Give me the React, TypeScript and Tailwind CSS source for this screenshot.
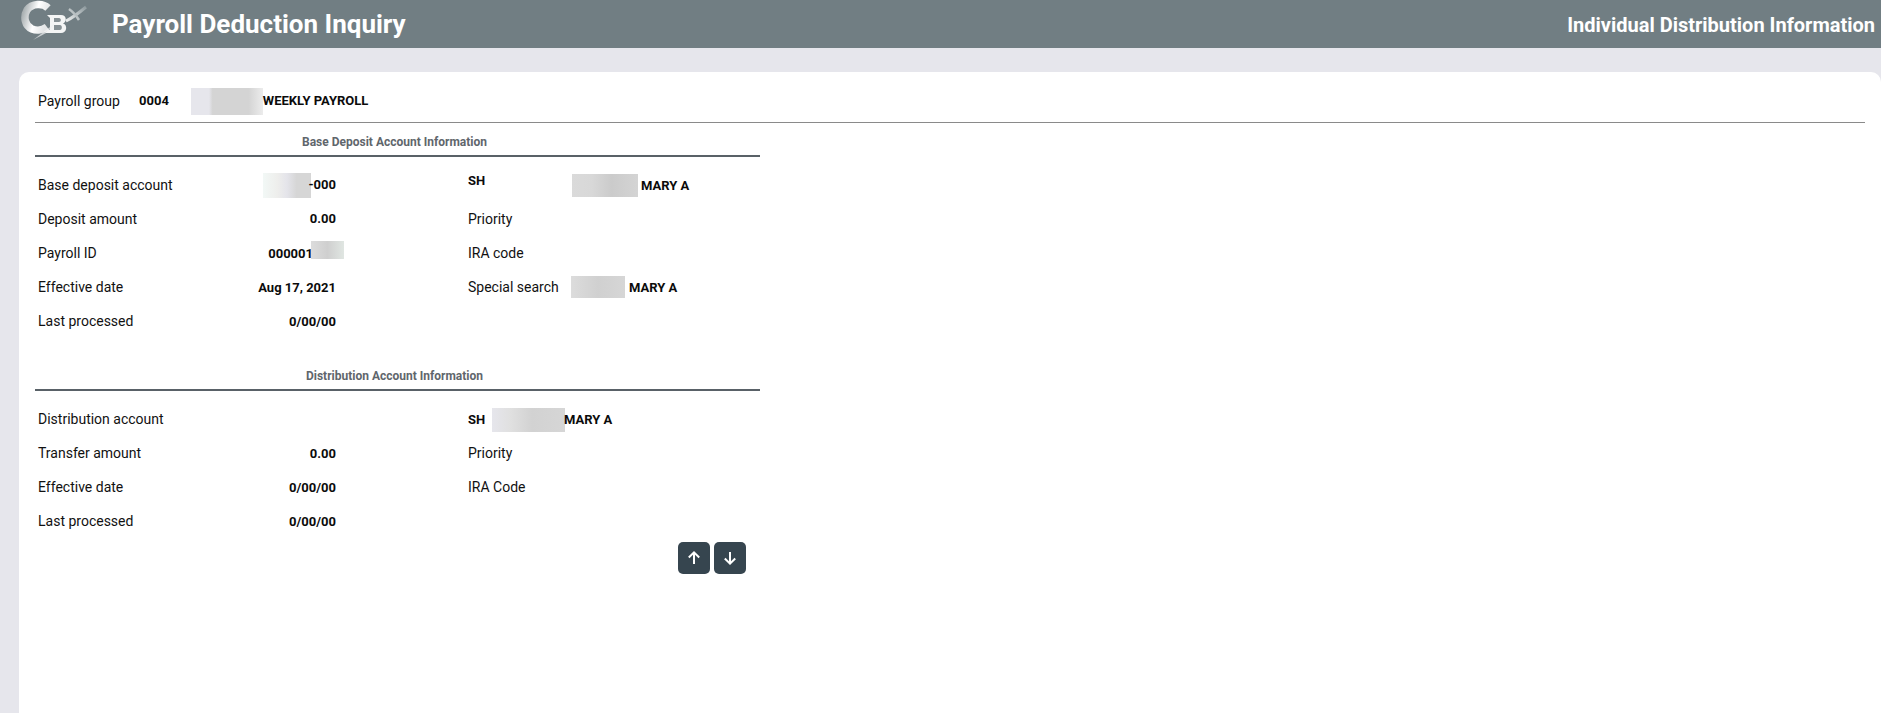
import { FunctionComponent, ReactNode } from "react";

const Val = ({ children }: { children: ReactNode }) => (
  <span className="text-[13px] font-bold text-[#0b0b0b] whitespace-nowrap">{children}</span>
);

const Blur = ({ className }: { className: string }) => <div className={`shrink-0 ${className}`} />;

const Row = ({ label, value, right }: { label: string; value?: ReactNode; right?: ReactNode }) => (
  <div className="flex h-[34.1px] items-center pl-[3px]">
    <div className="flex w-[298px] items-center justify-between">
      <span>{label}</span>
      {value}
    </div>
    <div className="ml-[132px] flex items-center">{right}</div>
  </div>
);

const SectionHead = ({ title }: { title: string }) => (
  <div className="w-[725px] border-b-2 border-[#596167] h-[34px] flex items-center justify-center pt-[6px] pr-[6px] text-[12px] font-bold text-[#5f666c]">
    {title}
  </div>
);

const Logo = () => (
  <svg width="70" height="44" viewBox="0 0 70 44" className="ml-[20px] self-start">
    <defs>
      <linearGradient id="cg" x1="0" y1="0" x2="1" y2="0.3">
        <stop offset="0" stopColor="#a9b0b2" />
        <stop offset="0.55" stopColor="#ffffff" />
        <stop offset="1" stopColor="#e4e6e7" />
      </linearGradient>
      <linearGradient id="xg" x1="0" y1="1" x2="1" y2="0">
        <stop offset="0" stopColor="#eef0f0" />
        <stop offset="1" stopColor="#8e9a9e" />
      </linearGradient>
    </defs>
    <path d="M28 8 C23 3 12 3 7 10 C3 17 5 26 12 29 C17 31 23 30 27 27" fill="none" stroke="url(#cg)" strokeWidth="7.5" />
    <path d="M27 15 H41 C47 15 47 22 43 23.500 C48 25 47 33 41 33 H25 L28 30 H30 V18 Z" fill="#f4f5f5" />
    <path d="M34 18 H39 C41.500 18 41.500 22 39 22 H34 Z M34 25 H40 C42.500 25 42.500 30 40 30 H34 Z" fill="#879195" />
    <path d="M13 40 L34 24 L28 32 Z" fill="url(#cg)" opacity="0.65" />
    <path d="M46 21 C52 18 60 12 66 7" fill="none" stroke="url(#xg)" strokeWidth="3" />
    <path d="M49 9 C52 11 56 15 59 20" fill="none" stroke="url(#xg)" strokeWidth="2.500" />
  </svg>
);

const App: FunctionComponent = () => {
  return (
    <div className="h-[713px] overflow-hidden bg-[#e6e6ec] flex flex-col font-['Roboto',sans-serif] text-[14px] text-[#111]">
      <header className="h-[48px] shrink-0 bg-[#717e83] flex items-center text-white">
        <Logo />
        <h1 className="ml-[22px] text-[26px] leading-[44px] font-bold">Payroll Deduction Inquiry</h1>
        <div className="ml-auto mr-[6px] pt-[2px] text-[20px] font-bold">Individual Distribution Information</div>
      </header>

      <main className="mt-6 ml-[19px] flex-1 rounded-t-[10px] bg-white pl-[16px] pr-[16px]">
        <div className="flex h-[51px] items-center border-b border-[#8a8a8a] pl-[3px] pt-[8px]">
          <span className="w-[101px]">Payroll group</span>
          <Val>0004</Val>
          <Blur className="ml-[22px] h-[27px] w-[72px] bg-[linear-gradient(90deg,#e6e6ec_0%,#e6e6ec_25%,#d4d4d4_30%,#d4d4d4_80%,#ececec_100%)]" />
          <Val>WEEKLY PAYROLL</Val>
        </div>

        <SectionHead title="Base Deposit Account Information" />
        <div className="pt-[11px]">
          <Row
            label="Base deposit account"
            value={
              <span className="flex items-center">
                <Blur className="-mr-[2px] h-[25px] w-[48px] bg-[linear-gradient(90deg,#f2f8f6_0%,#eeeeec_30%,#e4e4ea_50%,#d6d6d6_70%,#d6d6d6_100%)]" />
                <Val>-000</Val>
              </span>
            }
            right={
              <>
                <span className="-mt-[8px] w-[104px] text-[13px] font-bold text-[#0b0b0b]">SH</span>
                <Blur className="h-[23px] w-[66px] bg-[linear-gradient(90deg,#dadada_0%,#d8d8d8_30%,#cbcbcb_60%,#d4d4d4_100%)]" />
                <span className="ml-[3px]"><Val>MARY A</Val></span>
              </>
            }
          />
          <Row label="Deposit amount" value={<Val>0.00</Val>} right={<span>Priority</span>} />
          <Row
            label="Payroll ID"
            value={
              <span className="relative pr-[23px]">
                <Val>000001</Val>
                <Blur className="absolute -right-[8px] top-[-2px] h-[18px] w-[33px] bg-[linear-gradient(90deg,#dcdcdc_0%,#cfcfcf_50%,#e0e6e2_100%)]" />
              </span>
            }
            right={<span>IRA code</span>}
          />
          <Row
            label="Effective date"
            value={<Val>Aug 17, 2021</Val>}
            right={
              <>
                <span className="w-[103px]">Special search</span>
                <Blur className="h-[22px] w-[54px] bg-[linear-gradient(90deg,#dcdcdc_0%,#d0d0d0_50%,#d6d6d6_100%)]" />
                <span className="ml-[4px]"><Val>MARY A</Val></span>
              </>
            }
          />
          <Row label="Last processed" value={<Val>0/00/00</Val>} />
        </div>

        <div className="pt-[19px]">
          <SectionHead title="Distribution Account Information" />
        </div>
        <div className="pt-[11px]">
          <Row
            label="Distribution account"
            right={
              <>
                <span className="w-[24px] text-[13px] font-bold text-[#0b0b0b]">SH</span>
                <Blur className="h-[24px] w-[73px] bg-[linear-gradient(90deg,#e6e6ec_0%,#e0e0e0_25%,#d2d2d2_55%,#d6d6d6_100%)]" />
                <span className="-ml-[1px]"><Val>MARY A</Val></span>
              </>
            }
          />
          <Row label="Transfer amount" value={<Val>0.00</Val>} right={<span>Priority</span>} />
          <Row label="Effective date" value={<Val>0/00/00</Val>} right={<span>IRA Code</span>} />
          <Row label="Last processed" value={<Val>0/00/00</Val>} />
        </div>

        <div className="mt-[3px] flex w-[711px] justify-end gap-1">
          <button className="flex h-8 w-8 items-center justify-center rounded-[5px] bg-[#36454f] text-white">
            <svg width="16" height="16" viewBox="0 0 16 16" fill="none" stroke="currentColor" strokeWidth="2">
              <path d="M8 14V2.500M2.800 7.500L8 2.300L13.200 7.500" />
            </svg>
          </button>
          <button className="flex h-8 w-8 items-center justify-center rounded-[5px] bg-[#36454f] text-white">
            <svg width="16" height="16" viewBox="0 0 16 16" fill="none" stroke="currentColor" strokeWidth="2">
              <path d="M8 2V13.500M2.800 8.500L8 13.700L13.200 8.500" />
            </svg>
          </button>
        </div>
      </main>
    </div>
  );
};

export default App;
